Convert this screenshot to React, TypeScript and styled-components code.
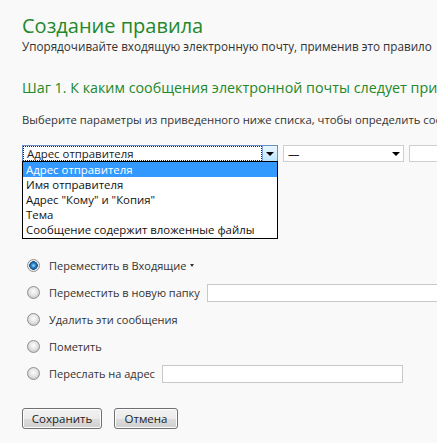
import React from 'react';
import styled, {createGlobalStyle} from 'styled-components';

const GlobalStyle = createGlobalStyle`
    html, body {
        margin: 0;
        padding: 0;
        background: #f9f9f9;
        overflow: hidden;
    }
    body {
        font-family: "Open Sans", "Noto Sans", sans-serif;
        color: #333;
    }
`;

const Page = styled.div`
    width: 437px;
    height: 443px;
    padding: 14px 0 0 22px;
    box-sizing: border-box;
    white-space: nowrap;
    overflow: hidden;
`;

const Title = styled.h1`
    margin: 0;
    font-size: 20px;
    font-weight: 400;
    line-height: 24px;
    color: #23882b;
`;

const Note = styled.p<{ $top: number; $size: number }>`
    margin: ${(p) => p.$top}px 0 0;
    font-size: ${(p) => p.$size}px;
    line-height: 15px;
    color: #333;
`;

const StepTitle = styled.h2`
    margin: 24px 0 0;
    font-size: 14.3px;
    font-weight: 400;
    line-height: 20px;
    color: #23882b;
`;

const SelectRow = styled.div`
    position: relative;
    display: flex;
    align-items: center;
    gap: 5px;
    margin-top: 18px;
`;

const Select = styled.div<{ $width: number; $focused?: boolean }>`
    display: flex;
    align-items: center;
    width: ${(p) => p.$width}px;
    height: 17px;
    box-sizing: border-box;
    border: 1px solid ${(p) => (p.$focused ? '#6b8fc0' : '#cfcfcf')};
    background: #fff;
    font-size: 11.4px;
    color: #222;
    flex-shrink: 0;
`;

const SelectValue = styled.div<{ $focused?: boolean }>`
    flex: 1;
    height: 100%;
    box-sizing: border-box;
    padding: 0 3px;
    line-height: 13px;
    border: 1px dotted ${(p) => (p.$focused ? '#222' : 'transparent')};
`;

const ArrowBox = styled.div<{ $focused?: boolean }>`
    width: 15px;
    height: 100%;
    display: flex;
    align-items: center;
    justify-content: center;
    box-sizing: border-box;
    ${(p) =>
        p.$focused &&
        `
        border-left: 1px solid #7ea5d6;
        background: linear-gradient(#eaf6fd, #bee6fd);
    `}
`;

const Arrow = styled.span`
    width: 0;
    height: 0;
    border-left: 4px solid transparent;
    border-right: 4px solid transparent;
    border-top: 4px solid #000;
`;

const DropList = styled.ul`
    position: absolute;
    left: 0;
    top: 16px;
    width: 256px;
    margin: 0;
    padding: 0 0 1px;
    list-style: none;
    box-sizing: border-box;
    border: 1px solid #000;
    background: #fff;
    z-index: 2;
`;

const DropItem = styled.li<{ $active?: boolean }>`
    height: 15px;
    line-height: 15px;
    padding: 0 3px;
    font-size: 11.4px;
    color: ${(p) => (p.$active ? '#fff' : '#111')};
    background: ${(p) => (p.$active ? '#3399ff' : 'transparent')};
`;

const Options = styled.div`
    display: flex;
    flex-direction: column;
    gap: 8px;
    margin-top: 94px;
    padding-left: 5px;
`;

const OptionRow = styled.label`
    display: flex;
    align-items: center;
    height: 19px;
    font-size: 11px;
    color: #333;
`;

const Radio = styled.span<{ $checked?: boolean }>`
    width: 13px;
    height: 13px;
    margin-right: 9px;
    border-radius: 50%;
    box-sizing: border-box;
    border: 1px solid #8f8f8f;
    background: ${(p) =>
        p.$checked
            ? 'radial-gradient(circle at 50% 50%, #a6dcf7 0, #2a8ad4 2px, #124c7e 4px, #e6e6e6 4.5px, #f4f4f4 6px)'
            : 'radial-gradient(circle at 50% 40%, #fdfdfd 0, #e4e4e4 4px, #cfcfcf 6px)'};
    flex-shrink: 0;
`;

const Caret = styled.span`
    margin-left: 4px;
    width: 0;
    height: 0;
    border-left: 2.5px solid transparent;
    border-right: 2.5px solid transparent;
    border-top: 3px solid #333;
`;

const TextBox = styled.div<{ $width: number }>`
    margin-left: 7px;
    width: ${(p) => p.$width}px;
    height: 18px;
    box-sizing: border-box;
    border: 1px solid #c8c8c8;
    background: #fff;
    flex-shrink: 0;
`;

const Buttons = styled.div`
    display: flex;
    gap: 12px;
    margin-top: 25px;
`;

const Button = styled.button<{ $width: number }>`
    width: ${(p) => p.$width}px;
    height: 21px;
    padding: 0;
    border: 1px solid #707070;
    border-radius: 3px;
    background: linear-gradient(#f2f2f2 0%, #ebebeb 50%, #dddddd 51%, #cfcfcf 100%);
    box-shadow: inset 0 0 0 1px #fcfcfc;
    font-family: inherit;
    font-size: 11.5px;
    color: #222;
`;

const senders = [
    'Адрес отправителя',
    'Имя отправителя',
    'Адрес "Кому" и "Копия"',
    'Тема',
    'Сообщение содержит вложенные файлы',
];

export default function App() {
    return (
        <Page>
            <GlobalStyle />
            <Title>Создание правила</Title>
            <Note $top={1} $size={11.7}>Упорядочивайте входящую электронную почту, применив это правило</Note>
            <StepTitle>Шаг 1. К каким сообщения электронной почты следует применять это правило?</StepTitle>
            <Note $top={14} $size={11.3}>Выберите параметры из приведенного ниже списка, чтобы определить сообщения, к которым будет применяться правило</Note>
            <SelectRow>
                <Select $width={256} $focused>
                    <SelectValue $focused>Адрес отправителя</SelectValue>
                    <ArrowBox $focused><Arrow /></ArrowBox>
                </Select>
                <Select $width={121}>
                    <SelectValue>—</SelectValue>
                    <ArrowBox><Arrow /></ArrowBox>
                </Select>
                <Select $width={120} />
                <DropList>
                    {senders.map((s, i) => (
                        <DropItem key={s} $active={i === 0}>{s}</DropItem>
                    ))}
                </DropList>
            </SelectRow>
            <Options>
                <OptionRow>
                    <Radio $checked />
                    Переместить в Входящие
                    <Caret />
                </OptionRow>
                <OptionRow>
                    <Radio />
                    Переместить в новую папку
                    <TextBox $width={260} />
                </OptionRow>
                <OptionRow>
                    <Radio />
                    Удалить эти сообщения
                </OptionRow>
                <OptionRow>
                    <Radio />
                    Пометить
                </OptionRow>
                <OptionRow>
                    <Radio />
                    Переслать на адрес
                    <TextBox $width={241} />
                </OptionRow>
            </Options>
            <Buttons>
                <Button $width={80}>Сохранить</Button>
                <Button $width={64}>Отмена</Button>
            </Buttons>
        </Page>
    );
}
